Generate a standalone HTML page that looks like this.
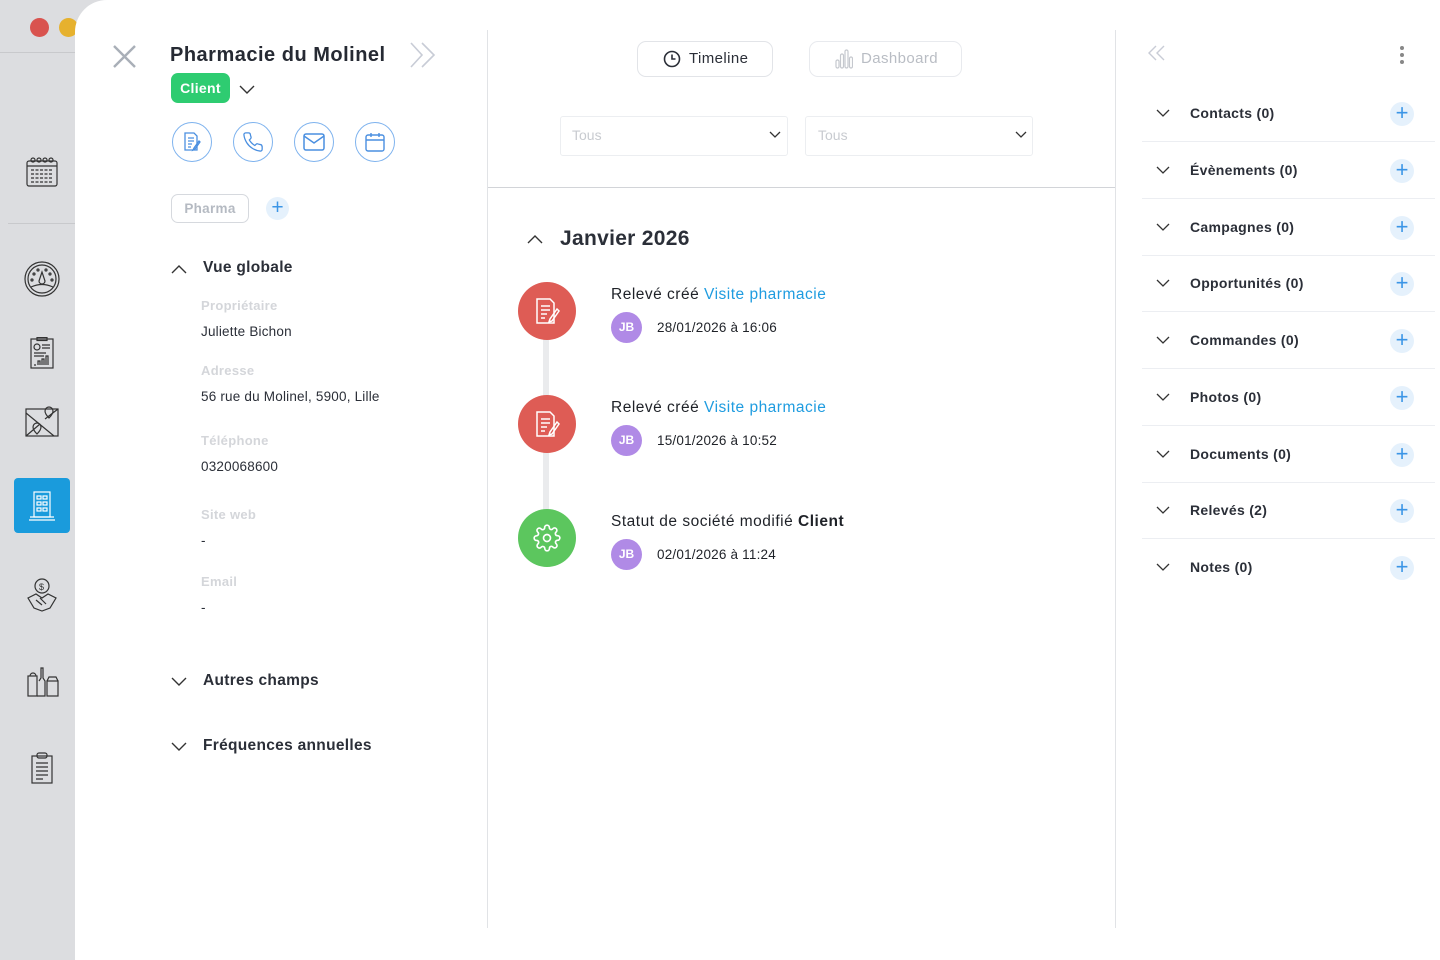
<!DOCTYPE html>
<html><head><meta charset="utf-8">
<style>
*{box-sizing:border-box;margin:0;padding:0}
body{width:1440px;height:960px;background:#dcdde0;font-family:"Liberation Sans",sans-serif;position:relative;overflow:hidden;color:#2b2f38}
.abs{position:absolute}
.panel{position:absolute;left:75px;top:0;width:1365px;height:960px;background:#fff;border-top-left-radius:32px}
.dot{position:absolute;width:19px;height:19px;border-radius:50%}
.side svg{position:absolute}
.circ{position:absolute;width:40px;height:40px;border:1.5px solid #7fb3ee;border-radius:50%;display:flex;align-items:center;justify-content:center}
.lbl{position:absolute;left:201px;font-size:13px;color:#d4d6da;font-weight:bold;letter-spacing:0.3px}
.val{position:absolute;left:201px;font-size:13.5px;color:#2b2f38;letter-spacing:0.2px}
.sec{position:absolute;left:203px;font-size:15.5px;font-weight:bold;color:#2b2f38;letter-spacing:0.3px}
.row{position:absolute;left:1142px;width:293px;height:57px;border-bottom:1px solid #eceef2}
.row .t{position:absolute;left:48px;top:0;line-height:57px;font-size:14px;font-weight:bold;color:#2b2f38;letter-spacing:0.3px}
.row .p{position:absolute;left:248px;top:17px;width:24px;height:24px;border-radius:50%;background:#e5f1fc;color:#3b95e6;font-size:22px;line-height:22px;text-align:center}
.row svg{position:absolute;left:14px;top:24px}
.ev{position:absolute;left:518px;width:58px;height:58px;border-radius:50%;display:flex;align-items:center;justify-content:center}
.et{position:absolute;left:611px;font-size:15.5px;color:#1f2228;letter-spacing:0.5px}
.jb{position:absolute;left:611px;width:31px;height:31px;border-radius:50%;background:#b08ae6;color:#fff;font-size:12px;font-weight:bold;text-align:center;line-height:31px}
.dt{position:absolute;left:657px;font-size:13.5px;color:#1f2228;letter-spacing:0.2px}
</style></head><body>
<div class="dot" style="left:30px;top:18px;background:#d9534f"></div>
<div class="dot" style="left:59px;top:18px;background:#e6b12e"></div>
<div class="abs" style="left:0;top:52px;width:75px;height:1px;background:#c8c9cc"></div>
<div class="abs" style="left:8px;top:223px;width:67px;height:1px;background:#c8c9cc"></div>
<div class="side">
<svg style="left:26px;top:157px" width="32" height="30" viewBox="0 0 32 30" fill="none" stroke="#333" stroke-width="1.2"><rect x="1" y="4" width="30" height="25" rx="2"/><line x1="1" y1="9" x2="31" y2="9"/><circle cx="7" cy="3" r="2"/><circle cx="13" cy="3" r="2"/><circle cx="19" cy="3" r="2"/><circle cx="25" cy="3" r="2"/><path d="M5 13h22M5 17h22M5 21h22M5 25h22" stroke-dasharray="3 1.5"/></svg>
<svg style="left:24px;top:261px" width="36" height="36" viewBox="0 0 36 36" fill="none" stroke="#333" stroke-width="1.2"><circle cx="18" cy="18" r="17"/><circle cx="18" cy="18" r="14"/><path d="M18 11l-3 9a3 3 0 0 0 6 0z"/><path d="M7 26q11 -5 22 0"/><circle cx="10" cy="13" r="1"/><circle cx="14" cy="9" r="1"/><circle cx="22" cy="9" r="1"/><circle cx="26" cy="13" r="1"/><circle cx="8" cy="19" r="1"/><circle cx="28" cy="19" r="1"/></svg>
<svg style="left:30px;top:337px" width="24" height="32" viewBox="0 0 24 32" fill="none" stroke="#333" stroke-width="1.2"><rect x="1" y="2" width="22" height="29"/><rect x="7" y="0.5" width="10" height="3"/><circle cx="7" cy="10" r="3"/><path d="M12 8h8M12 11h8M4 16h12M4 19h10M4 28h2M8 28v-4h2v4M12 28v-6h2v6M16 28v-9h2v9"/></svg>
<svg style="left:25px;top:405px" width="34" height="32" viewBox="0 0 34 32" fill="none" stroke="#333" stroke-width="1.2"><rect x="1" y="4" width="32" height="27"/><path d="M1 8l28 23M1 31l14 -12M20 14l13 -10"/><path d="M24 2a4 4 0 0 1 4 4c0 3-4 7-4 7s-4-4-4-7a4 4 0 0 1 4-4z"/><path d="M12 18a4 4 0 0 1 4 4c0 3-4 7-4 7s-4-4-4-7a4 4 0 0 1 4-4z"/></svg>
<div class="abs" style="left:14px;top:478px;width:56px;height:55px;background:#1a9bdc;border-radius:4px"></div>
<svg style="left:28px;top:491px" width="28" height="30" viewBox="0 0 28 30" fill="none" stroke="#fff" stroke-width="1.2"><rect x="6" y="1" width="16" height="25"/><rect x="9" y="5" width="4" height="3"/><rect x="15" y="5" width="4" height="3"/><rect x="9" y="11" width="4" height="3"/><rect x="15" y="11" width="4" height="3"/><rect x="9" y="17" width="4" height="3"/><rect x="15" y="17" width="4" height="3"/><path d="M1 29h26M2 26h24"/></svg>
<svg style="left:26px;top:578px" width="32" height="34" viewBox="0 0 32 34" fill="none" stroke="#333" stroke-width="1.2"><circle cx="16" cy="8" r="7"/><text x="13" y="12" font-size="9" fill="#333" stroke="none">$</text><path d="M2 20l8 -4 6 4 6 -4 8 4-6 10-8 3-8-3z"/><path d="M10 22l6 5M14 20l6 6"/></svg>
<svg style="left:27px;top:667px" width="32" height="30" viewBox="0 0 32 30" fill="none" stroke="#333" stroke-width="1.2"><rect x="1" y="9" width="9" height="20"/><path d="M3 9a3 3 0 0 1 6 0"/><path d="M10 29h8v-15l-2-3v-10h-2v10l-2 3"/><rect x="20" y="14" width="11" height="15"/><path d="M20 14l2-4h7l2 4"/></svg>
<svg style="left:31px;top:752px" width="22" height="32" viewBox="0 0 22 32" fill="none" stroke="#333" stroke-width="1.2"><rect x="1" y="4" width="20" height="27"/><rect x="6" y="1" width="10" height="5" rx="2"/><path d="M5 11h12M5 15h12M5 19h12M5 23h12M5 27h7"/></svg>
</div>

<div class="panel"></div>
<div class="abs" style="left:487px;top:30px;width:1px;height:898px;background:#e1e3e6"></div>
<div class="abs" style="left:1115px;top:30px;width:1px;height:898px;background:#e1e3e6"></div>
<div class="abs" style="left:488px;top:187px;width:627px;height:1px;background:#d2d4d8"></div>

<svg class="abs" style="left:112px;top:44px" width="25" height="25" viewBox="0 0 25 25" stroke="#a9afb8" stroke-width="2.4"><path d="M2 2l21 21M23 2L2 23"/></svg>
<div class="abs" style="left:170px;top:44px;font-size:20px;font-weight:bold;color:#262a33;letter-spacing:0.5px">Pharmacie du Molinel</div>
<svg class="abs" style="left:409px;top:42px" width="28" height="26" viewBox="0 0 28 26" fill="none" stroke="#c8ccd6" stroke-width="1.6"><path d="M2 1l11 12-11 12M13 1l12 12-12 12"/></svg>
<div class="abs" style="left:171px;top:73px;width:59px;height:30px;background:#2ecc71;border-radius:7px;color:#fff;font-weight:bold;font-size:14px;line-height:30px;text-align:center;letter-spacing:0.3px">Client</div>
<svg class="abs" style="left:239px;top:85px" width="16" height="10" viewBox="0 0 16 10" fill="none" stroke="#333" stroke-width="1.4"><path d="M1 1l7 7 7-7"/></svg>
<div class="circ" style="left:172px;top:122px"><svg width="20" height="20" viewBox="0 0 20 20" fill="none" stroke="#4a8fe0" stroke-width="1.3"><path d="M3 1h9l3 3v14H3z"/><path d="M6 6h6M6 9h6M6 12h4M6 15h3M17 9l-5 7-1 2 2-1 5-7z"/></svg></div>
<div class="circ" style="left:233px;top:122px"><svg width="22" height="22" viewBox="0 0 24 24" fill="none" stroke="#4a8fe0" stroke-width="1.4"><path d="M22 16.9v3a2 2 0 0 1-2.2 2 19.8 19.8 0 0 1-8.6-3.1 19.5 19.5 0 0 1-6-6A19.8 19.8 0 0 1 2.1 4.2 2 2 0 0 1 4.1 2h3a2 2 0 0 1 2 1.7c.1.9.4 1.8.7 2.7a2 2 0 0 1-.5 2.1L8 9.8a16 16 0 0 0 6 6l1.3-1.3a2 2 0 0 1 2.1-.4c.9.3 1.8.6 2.7.7a2 2 0 0 1 1.7 2z"/></svg></div>
<div class="circ" style="left:294px;top:122px"><svg width="22" height="18" viewBox="0 0 22 18" fill="none" stroke="#4a8fe0" stroke-width="1.5"><rect x="1" y="1" width="20" height="16" rx="2"/><path d="M1 3l10 7 10-7"/></svg></div>
<div class="circ" style="left:355px;top:122px"><svg width="20" height="20" viewBox="0 0 20 20" fill="none" stroke="#4a8fe0" stroke-width="1.4"><rect x="1" y="3" width="18" height="16" rx="2"/><path d="M1 8h18M6 1v4M14 1v4"/></svg></div>
<div class="abs" style="left:171px;top:194px;width:78px;height:29px;border:1px solid #d6d9de;border-radius:7px;font-size:13.5px;color:#b5bac2;font-weight:bold;line-height:27px;text-align:center;letter-spacing:0.3px">Pharma</div>
<div class="abs" style="left:266px;top:197px;width:23px;height:23px;border-radius:50%;background:#e5f1fc;color:#3b95e6;font-size:21px;line-height:21px;text-align:center">+</div>
<svg class="abs" style="left:171px;top:264px" width="16" height="10" viewBox="0 0 16 10" fill="none" stroke="#333" stroke-width="1.4"><path d="M1 9l7-7 7 7"/></svg>
<div class="sec" style="top:259px">Vue globale</div>
<div class="lbl" style="top:298px">Propriétaire</div>
<div class="val" style="top:324px">Juliette Bichon</div>
<div class="lbl" style="top:363px">Adresse</div>
<div class="val" style="top:389px">56 rue du Molinel, 5900, Lille</div>
<div class="lbl" style="top:433px">Téléphone</div>
<div class="val" style="top:459px">0320068600</div>
<div class="lbl" style="top:507px">Site web</div>
<div class="val" style="top:533px">-</div>
<div class="lbl" style="top:574px">Email</div>
<div class="val" style="top:600px">-</div>
<svg class="abs" style="left:171px;top:677px" width="16" height="10" viewBox="0 0 16 10" fill="none" stroke="#333" stroke-width="1.4"><path d="M1 1l7 7 7-7"/></svg>
<div class="sec" style="top:672px">Autres champs</div>
<svg class="abs" style="left:171px;top:742px" width="16" height="10" viewBox="0 0 16 10" fill="none" stroke="#333" stroke-width="1.4"><path d="M1 1l7 7 7-7"/></svg>
<div class="sec" style="top:737px">Fréquences annuelles</div>

<div class="abs" style="left:637px;top:41px;width:136px;height:36px;border:1px solid #e2e4e8;border-radius:9px"></div>
<svg class="abs" style="left:663px;top:50px" width="18" height="18" viewBox="0 0 18 18" fill="none" stroke="#2b2f38" stroke-width="1.6"><circle cx="9" cy="9" r="7.5"/><path d="M9 4.5V9h3.5"/></svg>
<div class="abs" style="left:689px;top:50px;font-size:15px;color:#2b2f38;letter-spacing:0.4px">Timeline</div>
<div class="abs" style="left:809px;top:41px;width:153px;height:36px;border:1px solid #e8eaee;border-radius:9px"></div>
<svg class="abs" style="left:835px;top:49px" width="18" height="20" viewBox="0 0 18 20" fill="none" stroke="#c5c8ce" stroke-width="1.2"><rect x="1" y="11" width="3" height="8" rx="1.5"/><rect x="5.5" y="5" width="3" height="14" rx="1.5"/><rect x="10" y="1" width="3" height="18" rx="1.5"/><rect x="14.5" y="8" width="3" height="11" rx="1.5"/></svg>
<div class="abs" style="left:861px;top:50px;font-size:15px;color:#b9bdc4;letter-spacing:0.4px">Dashboard</div>
<div class="abs" style="left:560px;top:116px;width:228px;height:40px;border:1px solid #eceef1;border-radius:3px"></div>
<div class="abs" style="left:572px;top:127px;font-size:14px;color:#c8cbd0">Tous</div>
<svg class="abs" style="left:769px;top:131px" width="12" height="8" viewBox="0 0 12 8" fill="none" stroke="#333" stroke-width="1.3"><path d="M1 1l5 5 5-5"/></svg>
<div class="abs" style="left:805px;top:116px;width:228px;height:40px;border:1px solid #eceef1;border-radius:3px"></div>
<div class="abs" style="left:818px;top:127px;font-size:14px;color:#c8cbd0">Tous</div>
<svg class="abs" style="left:1015px;top:131px" width="12" height="8" viewBox="0 0 12 8" fill="none" stroke="#333" stroke-width="1.3"><path d="M1 1l5 5 5-5"/></svg>
<svg class="abs" style="left:527px;top:234px" width="16" height="10" viewBox="0 0 16 10" fill="none" stroke="#333" stroke-width="1.4"><path d="M1 9l7-7 7 7"/></svg>
<div class="abs" style="left:560px;top:227px;font-size:21px;font-weight:bold;color:#2b2f38;letter-spacing:0.3px">Janvier 2026</div>
<div class="abs" style="left:543px;top:330px;width:6px;height:190px;background:#eaebed"></div>
<div class="ev" style="top:282px;background:#de5c55"><svg width="28" height="28" viewBox="0 0 28 28" fill="none" stroke="#fff" stroke-width="1.5"><path d="M4 2h13l4 4v20H4z"/><path d="M8 9h9M8 13h9M8 17h6M8 21h4M24 12l-7 10-1 3 3-1 7-10z"/></svg></div>
<div class="et" style="top:286px">Relevé créé <span style="color:#1f9ce0">Visite pharmacie</span></div>
<div class="jb" style="top:312px">JB</div><div class="dt" style="top:320px">28/01/2026 à 16:06</div>
<div class="ev" style="top:395px;background:#de5c55"><svg width="28" height="28" viewBox="0 0 28 28" fill="none" stroke="#fff" stroke-width="1.5"><path d="M4 2h13l4 4v20H4z"/><path d="M8 9h9M8 13h9M8 17h6M8 21h4M24 12l-7 10-1 3 3-1 7-10z"/></svg></div>
<div class="et" style="top:399px">Relevé créé <span style="color:#1f9ce0">Visite pharmacie</span></div>
<div class="jb" style="top:425px">JB</div><div class="dt" style="top:433px">15/01/2026 à 10:52</div>
<div class="ev" style="top:509px;background:#5cc65e"><svg width="28" height="28" viewBox="0 0 24 24" fill="none" stroke="#fff" stroke-width="1.4"><circle cx="12" cy="12" r="3"/><path d="M19.4 15a1.7 1.7 0 0 0 .3 1.8l.1.1a2 2 0 1 1-2.8 2.8l-.1-.1a1.7 1.7 0 0 0-1.8-.3 1.7 1.7 0 0 0-1 1.5V21a2 2 0 0 1-4 0v-.1a1.7 1.7 0 0 0-1.1-1.5 1.7 1.7 0 0 0-1.8.3l-.1.1a2 2 0 1 1-2.8-2.8l.1-.1a1.7 1.7 0 0 0 .3-1.8 1.7 1.7 0 0 0-1.5-1H3a2 2 0 0 1 0-4h.1a1.7 1.7 0 0 0 1.5-1.100 1.7 1.7 0 0 0-.3-1.8l-.1-.1a2 2 0 1 1 2.8-2.8l.1.1a1.7 1.7 0 0 0 1.8.3H9a1.7 1.7 0 0 0 1-1.5V3a2 2 0 0 1 4 0v.1a1.7 1.7 0 0 0 1 1.5 1.7 1.7 0 0 0 1.8-.3l.1-.1a2 2 0 1 1 2.8 2.8l-.1.1a1.7 1.7 0 0 0-.3 1.8V9a1.7 1.7 0 0 0 1.5 1H21a2 2 0 0 1 0 4h-.1a1.7 1.7 0 0 0-1.5 1z"/></svg></div>
<div class="et" style="top:513px">Statut de société modifié <b>Client</b></div>
<div class="jb" style="top:539px">JB</div><div class="dt" style="top:547px">02/01/2026 à 11:24</div>

<svg class="abs" style="left:1147px;top:45px" width="19" height="16" viewBox="0 0 19 16" fill="none" stroke="#c8ccd6" stroke-width="1.4"><path d="M9 1L2 8l7 7M17 1l-7 7 7 7"/></svg>
<div class="abs" style="left:1400px;top:46px;width:4px;height:4px;border-radius:50%;background:#888"></div>
<div class="abs" style="left:1400px;top:53px;width:4px;height:4px;border-radius:50%;background:#888"></div>
<div class="abs" style="left:1400px;top:60px;width:4px;height:4px;border-radius:50%;background:#888"></div>
<div class="row" style="top:85px"><svg width="14" height="9" viewBox="0 0 14 9" fill="none" stroke="#333" stroke-width="1.3"><path d="M1 1l6 6 6-6"/></svg><div class="t">Contacts (0)</div><div class="p">+</div></div>
<div class="row" style="top:142px"><svg width="14" height="9" viewBox="0 0 14 9" fill="none" stroke="#333" stroke-width="1.3"><path d="M1 1l6 6 6-6"/></svg><div class="t">Évènements (0)</div><div class="p">+</div></div>
<div class="row" style="top:199px"><svg width="14" height="9" viewBox="0 0 14 9" fill="none" stroke="#333" stroke-width="1.3"><path d="M1 1l6 6 6-6"/></svg><div class="t">Campagnes (0)</div><div class="p">+</div></div>
<div class="row" style="top:255px"><svg width="14" height="9" viewBox="0 0 14 9" fill="none" stroke="#333" stroke-width="1.3"><path d="M1 1l6 6 6-6"/></svg><div class="t">Opportunités (0)</div><div class="p">+</div></div>
<div class="row" style="top:312px"><svg width="14" height="9" viewBox="0 0 14 9" fill="none" stroke="#333" stroke-width="1.3"><path d="M1 1l6 6 6-6"/></svg><div class="t">Commandes (0)</div><div class="p">+</div></div>
<div class="row" style="top:369px"><svg width="14" height="9" viewBox="0 0 14 9" fill="none" stroke="#333" stroke-width="1.3"><path d="M1 1l6 6 6-6"/></svg><div class="t">Photos (0)</div><div class="p">+</div></div>
<div class="row" style="top:426px"><svg width="14" height="9" viewBox="0 0 14 9" fill="none" stroke="#333" stroke-width="1.3"><path d="M1 1l6 6 6-6"/></svg><div class="t">Documents (0)</div><div class="p">+</div></div>
<div class="row" style="top:482px"><svg width="14" height="9" viewBox="0 0 14 9" fill="none" stroke="#333" stroke-width="1.3"><path d="M1 1l6 6 6-6"/></svg><div class="t">Relevés (2)</div><div class="p">+</div></div>
<div class="row" style="top:539px;border-bottom:none"><svg width="14" height="9" viewBox="0 0 14 9" fill="none" stroke="#333" stroke-width="1.3"><path d="M1 1l6 6 6-6"/></svg><div class="t">Notes (0)</div><div class="p">+</div></div>
</body></html>
